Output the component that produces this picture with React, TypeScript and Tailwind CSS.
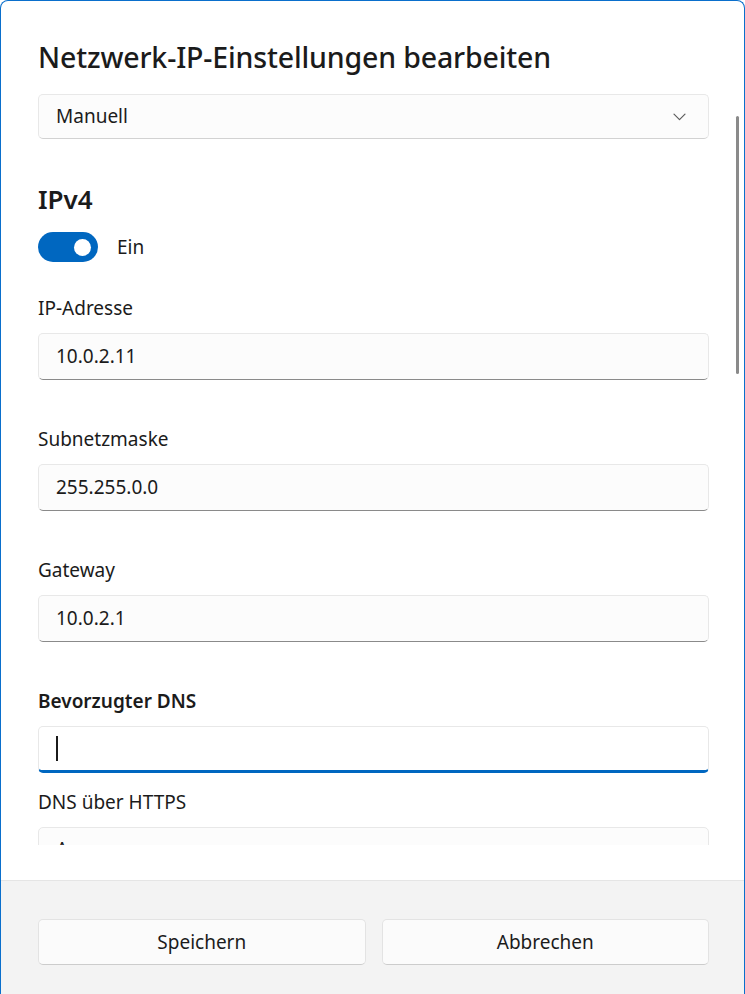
import { ReactNode } from 'react';

const font = { fontFamily: '"Noto Sans", "Open Sans", sans-serif' };

function Field({ label, value, bold, focused, first }: { label: string; value?: string; bold?: boolean; focused?: boolean; first?: boolean }) {
  return (
    <div className={first ? 'mt-[34px]' : 'mt-[47px]'}>
      <div className={`h-[24px] leading-[24px] text-[19px] text-[#1b1b1b] ${bold ? 'font-semibold' : ''}`}>{label}</div>
      <Input value={value} focused={focused} />
    </div>
  );
}

function Input({ value, focused }: { value?: string; focused?: boolean }) {
  return (
    <div
      className={`mt-[13px] h-[47px] rounded-[5px] border border-[#e8e8e8] bg-[#fcfcfc] flex items-center px-[17px] text-[19px] text-[#1b1b1b] ${
        focused ? 'border-b-[3px] border-b-[#0067c0] bg-white' : 'border-b-[#8a8a8a]'
      }`}
    >
      {focused ? <span className="w-[1.5px] h-[25px] bg-[#1b1b1b]" /> : value}
    </div>
  );
}

function Button({ children }: { children: ReactNode }) {
  return (
    <button className="flex-1 h-[46px] rounded-[5px] border border-[#e3e3e3] border-b-[#cccccc] bg-[#fbfbfb] text-[19px] text-[#1b1b1b]">
      {children}
    </button>
  );
}

export default function App() {
  return (
    <div style={font} className="relative w-[745px] h-[994px] bg-white border-x border-t border-[#0a6fcc] rounded-t-[8px] overflow-hidden flex flex-col">
      {/* scrollable content */}
      <div className="h-[844px] overflow-hidden pl-[37px] pr-[35px] pt-[38px] shrink-0">
        <h1 className="h-[36px] leading-[36px] text-[28.5px] font-medium text-[#1b1b1b] tracking-[-0.15px]">
          Netzwerk-IP-Einstellungen bearbeiten
        </h1>

        <div className="mt-[19px] h-[45px] rounded-[5px] border border-[#e8e8e8] border-b-[#d2d2d2] bg-[#fcfcfc] flex items-center justify-between pl-[17px] pr-[22px] text-[19px] text-[#1b1b1b]">
          <span>Manuell</span>
          <svg width="13" height="8" viewBox="0 0 13 8" fill="none">
            <path d="M1 1.2l5.5 5.5L12 1.2" stroke="#5c5c5c" strokeWidth="1.2" strokeLinecap="round" strokeLinejoin="round" />
          </svg>
        </div>

        <div className="mt-[43px] h-[34px] leading-[34px] text-[26px] font-semibold text-[#1b1b1b]">IPv4</div>

        <div className="mt-[16px] flex items-center gap-[19px]">
          <div className="w-[60px] h-[30px] rounded-full bg-[#0067c0] flex items-center justify-end pr-[7px]">
            <div className="w-[17px] h-[17px] rounded-full bg-white" />
          </div>
          <span className="text-[19px] text-[#1b1b1b]">Ein</span>
        </div>

        <Field first label="IP-Adresse" value="10.0.2.11" />
        <Field label="Subnetzmaske" value="255.255.0.0" />
        <Field label="Gateway" value="10.0.2.1" />
        <Field label="Bevorzugter DNS" bold focused />

        <div className="mt-[17px]">
          <div className="h-[24px] leading-[24px] text-[19px] text-[#1b1b1b]">DNS über HTTPS</div>
          <div className="mt-[13px] h-[47px] rounded-[5px] border border-[#e8e8e8] bg-[#fcfcfc] px-[17px] pt-[9px] text-[19px] leading-[24px] text-[#1b1b1b]">
            Aus
          </div>
        </div>
      </div>

      <div className="flex-1 bg-white" />

      <footer className="h-[114px] shrink-0 bg-[#f3f3f3] border-t border-[#e5e5e5] pl-[37px] pr-[35px] pt-[38px] flex items-start gap-[16px]">
        <Button>Speichern</Button>
        <Button>Abbrechen</Button>
      </footer>

      {/* overlay scrollbar */}
      <div className="absolute right-[5px] top-[115px] w-[3px] h-[258px] rounded-full bg-[#8a8a8a]" />
    </div>
  );
}
